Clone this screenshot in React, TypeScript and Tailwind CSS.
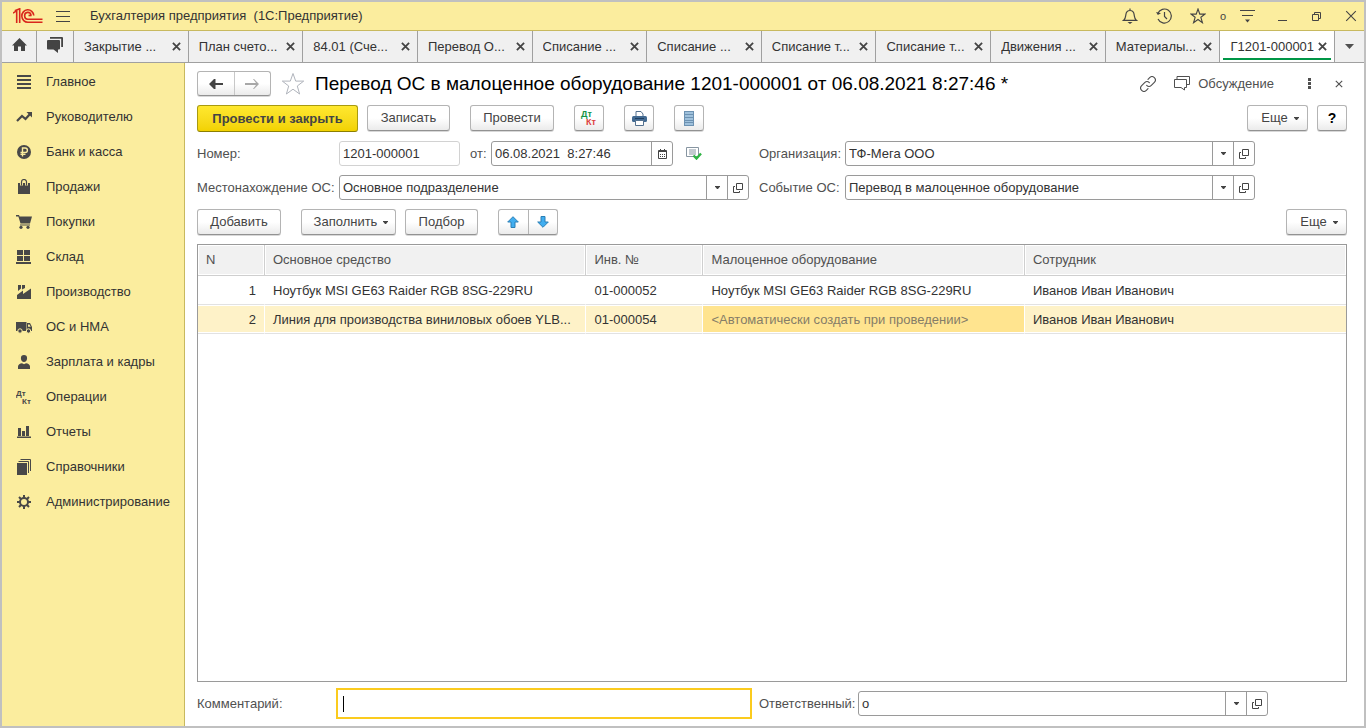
import { useState, type ReactNode } from 'react';

interface AssetRow {
  id: number;
  asset: string;
  inventory: string;
  equipment: string | null;
  employee: string;
}

const TABS = [
  'Закрытие ...',
  'План счето...',
  '84.01 (Сче...',
  'Перевод О...',
  'Списание ...',
  'Списание ...',
  'Списание т...',
  'Списание т...',
  'Движения ...',
  'Материалы...',
  'Г1201-000001',
];

const ROWS: AssetRow[] = [
  {
    id: 1,
    asset: 'Ноутбук MSI GE63 Raider RGB 8SG-229RU',
    inventory: '01-000052',
    equipment: 'Ноутбук MSI GE63 Raider RGB 8SG-229RU',
    employee: 'Иванов Иван Иванович',
  },
  {
    id: 2,
    asset: 'Линия для производства виниловых обоев YLB...',
    inventory: '01-000054',
    equipment: null,
    employee: 'Иванов Иван Иванович',
  },
];

const SECTIONS: { label: string; icon: ReactNode }[] = [
  { label: 'Главное', icon: <path d="M1 1h14v2H1zM1 5h14v2H1zM1 9h14v2H1zM1 13h14v2H1z" /> },
  {
    label: 'Руководителю',
    icon: (
      <>
        <path d="M1 12l5-5 3.5 3L14 5" fill="none" stroke="currentColor" strokeWidth="2.2" />
        <path d="M10.5 3H16v5.5z" />
      </>
    ),
  },
  {
    label: 'Банк и касса',
    icon: (
      <>
        <circle cx="8" cy="8" r="7" />
        <path d="M6.5 12.5V4h2.7a2.1 2.1 0 0 1 0 4.4H4.5M4.5 10.3h5" fill="none" stroke="#fbed9e" strokeWidth="1.4" />
      </>
    ),
  },
  {
    label: 'Продажи',
    icon: (
      <>
        <path d="M2 4h12v11H2z" />
        <path d="M5.5 6.500V3a2.5 2.5 0 0 1 5 0v3.500" fill="none" stroke="#fbed9e" strokeWidth="3" />
        <path d="M5.5 6.500V3a2.5 2.5 0 0 1 5 0v3.500" fill="none" stroke="currentColor" strokeWidth="1.2" />
      </>
    ),
  },
  {
    label: 'Покупки',
    icon: (
      <>
        <path d="M0 1h3l.6 1.500H16l-2 7H4.5L2.4 2.5H0z" />
        <path d="M4 10.500h10v1H4z" />
        <circle cx="5" cy="13.3" r="1.6" />
        <circle cx="12" cy="13.3" r="1.6" />
      </>
    ),
  },
  { label: 'Склад', icon: <path d="M1 1h6v5H1zM8 1h6v5H8zM1 7h6v5H1zM8 7h6v5H8zM0 13h15v2H0z" /> },
  { label: 'Производство', icon: <path d="M1 15v-4l6-4.500V10l8-5.5V15zM2 1h3v3.500L2 7zM6 1h3v3L6 5.5z" /> },
  {
    label: 'ОС и НМА',
    icon: (
      <>
        <path d="M0 3h10.5v9H0zM11 4h3l2 4v4h-5z" />
        <path d="M12 5.4h1.5l1.2 2.4H12z" fill="#fbed9e" />
        <circle cx="4" cy="12" r="2.2" stroke="#fbed9e" />
        <circle cx="12.5" cy="12" r="2.2" stroke="#fbed9e" />
      </>
    ),
  },
  {
    label: 'Зарплата и кадры',
    icon: <path d="M8 1a3.1 3.3 0 0 1 3.1 3.3C11.1 6.5 9.7 8 8 8S4.9 6.5 4.9 4.3A3.1 3.3 0 0 1 8 1zM2 15v-2.5C2 10.500 4 9.500 6 9.300l2 1 2-1c2 .2 4 1.200 4 3.200V15z" />,
  },
  {
    label: 'Операции',
    icon: (
      <>
        <text x="0" y="6.5" fontSize="8" fontWeight="bold">Дт</text>
        <text x="6" y="15" fontSize="8" fontWeight="bold">Кт</text>
      </>
    ),
  },
  { label: 'Отчеты', icon: <path d="M2 4h3v8H2zM6 7h3v5H6zM10 2h3v10h-3zM1 12.5h14V14H1z" /> },
  {
    label: 'Справочники',
    icon: (
      <>
        <path d="M1 4h10v12H1z" />
        <path d="M2.5 2.5h10V14M4.5.5h10V12" fill="none" stroke="currentColor" />
      </>
    ),
  },
  {
    label: 'Администрирование',
    icon: (
      <>
        <circle cx="8" cy="8" r="4" fill="none" stroke="currentColor" strokeWidth="2" />
        <path
          d="M8 1v3M8 12v3M1 8h3M12 8h3M3 3l2.2 2.2M10.800 10.800L13 13M13 3l-2.200 2.200M5.200 10.800L3 13"
          stroke="currentColor"
          strokeWidth="2"
        />
      </>
    ),
  },
];

const BTN =
  'flex items-center justify-center rounded-[3px] border border-[#b4b4b4] border-b-[#929292] bg-linear-to-b from-white from-50% to-[#ebebeb] text-[#444] shadow-[0_1px_0_#d8d8d8]';

function Logo() {
  return (
    <svg width="30" height="16" viewBox="0 0 30 16" fill="none" stroke="#d9261c" strokeWidth="1.6" aria-label="1С">
      <path d="M0 5.2L3.700 2.700V15M1.800 2.800L6.700.8V15" />
      <path d="M20.800 7.500A6 6.200 0 1 0 15 14.200H29.500" />
      <path d="M18 7.500A3.200 3.400 0 1 0 15 11.200H29.500" />
      <path d="M15.500 7.500h3" />
    </svg>
  );
}

function Caret() {
  return (
    <svg width="5" height="3" viewBox="0 0 5 3" fill="#444" aria-hidden="true">
      <path d="M0 0h5v.5L3 3H2L0 .5z" />
    </svg>
  );
}

function Cross({ size = 10, width = 1.2 }: { size?: number; width?: number }) {
  return (
    <svg width={size} height={size} viewBox="0 0 10 10" fill="none" stroke="currentColor" strokeWidth={width} aria-hidden="true">
      <path d="M1 1l8 8M9 1l-8 8" />
    </svg>
  );
}

function StarIcon({ size, color, width }: { size: number; color: string; width: number }) {
  return (
    <svg width={size} height={size} viewBox="0 0 24 24" fill="none" stroke={color} strokeWidth={width} aria-hidden="true">
      <path d="M12 1.500l2.700 7.600h8l-6.400 4.900 2.300 8L12 17.200 5.400 22l2.300-8L1.300 9.100h8z" />
    </svg>
  );
}

interface ComboProps {
  id: string;
  label: string;
  value: string;
  labelClass: string;
}

// Text field with a list button and an "open card" button
function Combo({ id, label, value, labelClass }: ComboProps) {
  const [text, setText] = useState(value);
  return (
    <div className="flex min-w-0 items-center">
      <label htmlFor={id} className={`${labelClass} shrink-0 whitespace-nowrap text-[#505050]`}>{label}</label>
      <div className="flex h-[25px] min-w-0 flex-1 rounded-[3px] border border-[#9a9a9a] bg-white">
        <input
          id={id}
          value={text}
          onChange={(e) => setText(e.target.value)}
          className="min-w-0 flex-1 bg-transparent px-[3px] outline-none"
        />
        <button aria-label="Выбрать" className="flex w-[21px] items-center justify-center border-l border-[#9a9a9a]">
          <Caret />
        </button>
        <button aria-label="Открыть" className="flex w-[21px] items-center justify-center border-l border-[#9a9a9a]">
          <svg width="10" height="10" viewBox="0 0 10 10" fill="none" stroke="#444">
            <path d="M3.500.5h6v6h-6zM2 3.500H.5v6h6V8" />
          </svg>
        </button>
      </div>
    </div>
  );
}

export default function App() {
  const [activeTab, setActiveTab] = useState(TABS.length - 1);
  const [date, setDate] = useState('06.08.2021  8:27:46');
  const [comment, setComment] = useState('');

  return (
    <div className="flex min-h-screen flex-col border-2 border-[#c0c0c0] bg-white font-['Liberation_Sans',Arial,sans-serif] text-[13px] leading-4 text-[#333]">
      {/* Window title bar */}
      <header className="flex h-[29px] items-center border-b border-[#c8b95f] bg-[#fbed9e] pl-[11px] pr-[7px]">
        <Logo />
        <button aria-label="Меню" className="ml-[13px]">
          <svg width="14" height="11" viewBox="0 0 14 11" stroke="#444">
            <path d="M0 .5h14M0 5.500h14M0 10.500h14" />
          </svg>
        </button>
        <span className="ml-5 flex-1 whitespace-pre">Бухгалтерия предприятия  (1С:Предприятие)</span>
        <div className="flex items-center text-[#444]">
          <button aria-label="Уведомления">
            <svg width="16" height="16" viewBox="0 0 16 16" fill="none" stroke="currentColor" strokeWidth="1.2">
              <path d="M8 .5v2M1.500 12.400c2-1.500 2-3 2.300-5.400C4.100 4 5.500 2.500 8 2.500S11.900 4 12.200 7c.3 2.400.3 3.900 2.300 5.400z" />
              <path d="M5.500 14h5L8 16z" fill="currentColor" stroke="none" />
            </svg>
          </button>
          <button aria-label="История" className="ml-[18px]">
            <svg width="16" height="16" viewBox="0 0 16 16" fill="none" stroke="currentColor" strokeWidth="1.2">
              <path d="M1.800 5.500A7 7 0 1 1 2 11M8.500 4v4.500L11 11" />
              <path d="M0 4l1.800 3L5 5.200z" fill="currentColor" stroke="none" />
            </svg>
          </button>
          <button aria-label="Избранное" className="ml-[18px]">
            <StarIcon size={16} color="#444" width={1.7} />
          </button>
          <span className="ml-[14px] text-[11px]">o</span>
          <button aria-label="Настройки" className="ml-[14px]">
            <svg width="15" height="13" viewBox="0 0 15 13" fill="none" stroke="currentColor">
              <path d="M0 .5h15M2 5.500h11" strokeWidth="1.2" />
              <path d="M5 9.500h5l-2.500 3z" fill="currentColor" stroke="none" />
            </svg>
          </button>
          <button aria-label="Свернуть" className="ml-[23px]">
            <svg width="9" height="9" viewBox="0 0 9 9" stroke="currentColor"><path d="M0 8.500h9" /></svg>
          </button>
          <button aria-label="Восстановить" className="ml-[25px]">
            <svg width="9" height="9" viewBox="0 0 9 9" fill="none" stroke="currentColor">
              <path d="M.5 2.500h6v6h-6zM2.500 2V.5h6v6H7" />
            </svg>
          </button>
          <button aria-label="Закрыть" className="ml-6">
            <Cross size={12} width={0.9} />
          </button>
        </div>
      </header>

      {/* Open windows */}
      <nav className="flex h-8 border-b border-[#a0a0a0] bg-[#f0f0f0]">
        <button aria-label="Начальная страница" className="flex w-[35px] shrink-0 items-center justify-center border-r border-[#a0a0a0] pb-1">
          <svg width="15" height="13" viewBox="0 0 15 13" fill="#444">
            <path d="M7.500 0L15 7.500h-2V13H9V8.500H6V13H2V7.500H0z" />
          </svg>
        </button>
        <button aria-label="Обсуждения" className="flex w-[37px] shrink-0 items-center justify-center border-r border-[#a0a0a0] pb-1">
          <svg width="16" height="16" viewBox="0 0 16 16" fill="#444">
            <path d="M1 3h11a1 1 0 0 1 1 1v7.500a1 1 0 0 1-1 1h-1V16l-4.500-3.500H1a1 1 0 0 1-1-1V4a1 1 0 0 1 1-1z" />
            <path d="M3 0h12a1 1 0 0 1 1 1v9h-1.800V1.800H3z" />
          </svg>
        </button>
        {TABS.map((tab, i) => (
          <div
            key={i}
            className={`flex min-w-0 flex-1 items-start border-r border-[#a0a0a0] px-[3px] ${i === activeTab ? 'bg-white' : ''}`}
          >
            <div
              className={`flex h-[29px] min-w-0 flex-1 items-center border-b-2 pt-1 pr-1 pl-[7px] ${i === activeTab ? 'border-[#009646]' : 'border-transparent'}`}
            >
              <button onClick={() => setActiveTab(i)} className="min-w-0 flex-1 truncate text-left">{tab}</button>
              <button aria-label={`Закрыть ${tab}`} className="shrink-0 text-[#444]">
                <Cross size={9} width={2} />
              </button>
            </div>
          </div>
        ))}
        <button aria-label="Все окна" className="flex w-[29px] shrink-0 items-center justify-center">
          <svg width="9" height="5" viewBox="0 0 9 5" fill="#505050"><path d="M0 0h9L4.500 5z" /></svg>
        </button>
      </nav>

      <div className="flex flex-1">
        {/* Sections panel */}
        <aside className="w-[183px] shrink-0 border-r border-[#c8b95f] bg-[#fbed9e] pt-px">
          {SECTIONS.map((section) => (
            <a key={section.label} href="#" className="flex h-[35px] items-center gap-[14px] pl-[14px]">
              <svg width="16" height="16" viewBox="0 0 16 16" fill="currentColor" className="shrink-0 text-[#484848]">
                {section.icon}
              </svg>
              {section.label}
            </a>
          ))}
        </aside>

        <main className="flex min-w-0 flex-1 flex-col pt-2 pr-[17px] pb-[7px] pl-3">
          {/* Document header */}
          <div className="flex h-[25px] items-center">
            <div className={`${BTN} h-[25px] w-[74px]`}>
              <button aria-label="Назад" className="flex h-full flex-1 items-center justify-center border-r border-[#c8c8c8]">
                <svg width="14" height="10" viewBox="0 0 14 10" fill="#444"><path d="M0 5L5 0h1.500v4H14v2H6.500v4H5z" /></svg>
              </button>
              <button aria-label="Вперед" className="flex h-full flex-1 items-center justify-center">
                <svg width="14" height="10" viewBox="0 0 14 10" fill="#a8a8a8"><path d="M14 5L9 0H8l3 4H0v2h11l-3 4h1z" /></svg>
              </button>
            </div>
            <button aria-label="В избранное" className="ml-[10px]">
              <StarIcon size={24} color="#b0b4bc" width={1} />
            </button>
            <h1 className="ml-[10px] flex-1 truncate text-[19px] leading-6 text-black">
              Перевод ОС в малоценное оборудование 1201-000001 от 06.08.2021 8:27:46 *
            </h1>
            <button aria-label="Получить ссылку">
              <svg width="16" height="16" viewBox="0 0 24 24" fill="none" stroke="#505050" strokeWidth="1.7" strokeLinecap="round">
                <path d="M10 14a5 5 0 0 0 7 0l4.500-4.500a4.700 4.700 0 0 0-7-7L12 5M14 10a5 5 0 0 0-7 0l-4.500 4.500a4.700 4.700 0 0 0 7 7L12 19" />
              </svg>
            </button>
            <button className="ml-[18px] flex items-center gap-2 text-[#505050]">
              <svg width="16" height="15" viewBox="0 0 16 15" fill="none" stroke="currentColor">
                <path d="M.5 3.500h12v8h-2V14L7 11.500H.5z" />
                <path d="M3 3V.5h12.500v8H13" />
              </svg>
              Обсуждение
            </button>
            <button aria-label="Дополнительно" className="ml-[34px]">
              <svg width="3" height="11" viewBox="0 0 3 11" fill="#505050"><path d="M0 0h3v3H0zM0 4h3v3H0zM0 8h3v3H0z" /></svg>
            </button>
            <button aria-label="Закрыть документ" className="mr-1 ml-6 text-[#505050]">
              <Cross size={8} width={1.4} />
            </button>
          </div>

          {/* Commands */}
          <div className="mt-[9px] flex">
            <button className="flex h-[27px] w-[161px] items-center justify-center rounded-[3px] border border-[#a89a10] border-b-[#8c7f00] bg-linear-to-b from-[#ffe82e] to-[#f2d200] font-bold text-[#444]">
              Провести и закрыть
            </button>
            <button className={`${BTN} ml-[9px] h-[26px] w-[83px]`}>Записать</button>
            <button className={`${BTN} ml-5 h-[26px] w-[84px]`}>Провести</button>
            <button aria-label="Показать проводки" className={`${BTN} ml-5 h-[26px] w-[30px]`}>
              <svg width="18" height="18" viewBox="0 0 18 18" fontSize="9" fontWeight="bold">
                <text x="1" y="8" fill="#149447">Дт</text>
                <text x="6" y="16" fill="#dd4040">Кт</text>
              </svg>
            </button>
            <button aria-label="Печать" className={`${BTN} ml-5 h-[26px] w-[30px]`}>
              <svg width="15" height="15" viewBox="0 0 15 15">
                <path d="M4 5V.5h5L11 3v2" fill="#fff" stroke="#54718f" />
                <rect y="5" width="15" height="6" rx="1.5" fill="#426a92" />
                <path d="M3 7.500h9" stroke="#1f3f61" />
                <path d="M3.500 9.500h8v5h-8z" fill="#fff" stroke="#54718f" />
              </svg>
            </button>
            <button aria-label="Реестр" className={`${BTN} ml-5 h-[26px] w-[30px]`}>
              <svg width="10" height="15" viewBox="0 0 10 15">
                <path d="M0 0h10v15H0z" fill="#6d92b2" />
                <path d="M1 1h8v2H1zM1 4h8v2H1zM1 7h8v2H1zM1 10h8v1H1zM1 12h8v2H1z" fill="#9fc1dc" />
              </svg>
            </button>
            <button className={`${BTN} ml-auto h-[26px] w-[61px] gap-[6px] pl-[5px]`}>Еще <Caret /></button>
            <button className={`${BTN} ml-[9px] h-[26px] w-[30px] text-[14px] font-bold text-black`}>?</button>
          </div>

          {/* Document fields */}
          <div className="mt-[9px] grid grid-cols-[552fr_496fr_82fr] gap-x-[10px] gap-y-[9px]">
            <div className="flex min-w-0 items-center">
              <label htmlFor="number" className="w-[142px] shrink-0 text-[#505050]">Номер:</label>
              <input
                id="number"
                defaultValue="1201-000001"
                className="h-[25px] w-[121px] rounded-[3px] border border-[#d2d2d2] px-[3px] outline-none"
              />
              <label htmlFor="date" className="ml-[10px] w-[21px] shrink-0 text-[#505050]">от:</label>
              <div className="flex h-[25px] w-[182px] rounded-[3px] border border-[#9a9a9a]">
                <input
                  id="date"
                  value={date}
                  onChange={(e) => setDate(e.target.value)}
                  className="min-w-0 flex-1 bg-transparent px-[3px] outline-none"
                />
                <button aria-label="Календарь" className="flex w-[21px] items-center justify-center border-l border-[#9a9a9a]">
                  <svg width="9" height="10" viewBox="0 0 9 10" fill="none" stroke="#444">
                    <path d="M.5 1.500h8v8h-8z" />
                    <path d="M0 2.500h9M2.500 0v2M6.500 0v2" />
                    <path d="M2 5.500h1M4 5.500h1M6 5.500h1M2 7.500h1M4 7.500h1M6 7.500h1" />
                  </svg>
                </button>
              </div>
              <svg width="16" height="13" viewBox="0 0 16 13" fill="none" className="ml-[13px] shrink-0">
                <path d="M.5.5h12v9H.5z" stroke="#8795a1" fill="#fff" />
                <path d="M3 3h7M3 5h7M3 7h7" stroke="#8795a1" />
                <path d="M7.500 8.500l3 3L15 6.500" stroke="#2fb344" strokeWidth="2.4" />
              </svg>
            </div>
            <Combo id="organization" label="Организация:" value="ТФ-Мега ООО" labelClass="w-[86px]" />
            <div />
            <Combo id="location" label="Местонахождение ОС:" value="Основное подразделение" labelClass="w-[142px]" />
            <Combo id="event" label="Событие ОС:" value="Перевод в малоценное оборудование" labelClass="w-[86px]" />
          </div>

          {/* Table commands */}
          <div className="mt-[9px] flex h-[27px]">
            <button className={`${BTN} h-[26px] w-[84px]`}>Добавить</button>
            <button className={`${BTN} ml-5 h-[26px] w-[95px] gap-[6px] pl-[5px]`}>Заполнить <Caret /></button>
            <button className={`${BTN} ml-[9px] h-[26px] w-[73px]`}>Подбор</button>
            <div className={`${BTN} ml-5 h-[26px] w-[60px]`}>
              <button aria-label="Переместить вверх" className="flex h-full flex-1 items-center justify-center border-r border-[#b4b4b4]">
                <svg width="12" height="12" viewBox="0 0 12 12" fill="#41aef0" stroke="#2a7fb5"><path d="M6 .7L11.300 6H8v5.500H4V6H.7z" /></svg>
              </button>
              <button aria-label="Переместить вниз" className="flex h-full flex-1 items-center justify-center">
                <svg width="12" height="12" viewBox="0 0 12 12" fill="#41aef0" stroke="#2a7fb5"><path d="M6 11.300L.7 6H4V.5h4V6h3.300z" /></svg>
              </button>
            </div>
            <button className={`${BTN} ml-auto h-[26px] w-[61px] gap-[6px] pl-[5px]`}>Еще <Caret /></button>
          </div>

          {/* Fixed assets */}
          <div className="mt-2 flex-1 border border-[#9a9a9a]">
            <table className="w-full table-fixed border-separate border-spacing-0 text-left">
              <thead>
                <tr className="h-[31px] bg-[#f1f1f1] text-[#505050]">
                  <th className="w-[67px] border-r border-b border-[#cfcfcf] px-2 font-normal shadow-[inset_0_0_0_1px_#fff]">N</th>
                  <th className="w-[28%] border-r border-b border-[#cfcfcf] px-2 font-normal shadow-[inset_0_0_0_1px_#fff]">Основное средство</th>
                  <th className="w-[117px] border-r border-b border-[#cfcfcf] px-2 font-normal shadow-[inset_0_0_0_1px_#fff]">Инв. №</th>
                  <th className="w-[28%] border-r border-b border-[#cfcfcf] px-2 font-normal shadow-[inset_0_0_0_1px_#fff]">Малоценное оборудование</th>
                  <th className="border-b border-[#cfcfcf] px-2 font-normal shadow-[inset_0_0_0_1px_#fff]">Сотрудник</th>
                </tr>
              </thead>
              <tbody>
                {ROWS.map((row) => {
                  const cell = `border-b border-b-[#e2e2e2] px-2 pt-0.5 truncate ${row.equipment ? '' : 'bg-[#fef2c8] shadow-[inset_0_1px_0_#fff,inset_0_-1px_0_#fff]'}`;
                  return (
                    <tr key={row.id} className="h-[29px]">
                      <td className={`${cell} border-r border-r-white text-right`}>{row.id}</td>
                      <td className={`${cell} border-r border-r-white`}>{row.asset}</td>
                      <td className={`${cell} border-r border-r-white`}>{row.inventory}</td>
                      {row.equipment ? (
                        <td className={`${cell} border-r border-r-white`}>{row.equipment}</td>
                      ) : (
                        <td className="truncate border-r border-b border-r-white border-b-[#e2e2e2] bg-[#ffe48f] px-2 pt-0.5 text-[#857d68] shadow-[inset_0_1px_0_#fff,inset_0_-1px_0_#fff]">
                          &lt;Автоматически создать при проведении&gt;
                        </td>
                      )}
                      <td className={cell}>{row.employee}</td>
                    </tr>
                  );
                })}
              </tbody>
            </table>
          </div>

          {/* Footer fields */}
          <div className="mt-[6px] grid grid-cols-[555fr_509fr_72fr] gap-x-[7px]">
            <div className="flex items-center">
              <label htmlFor="comment" className="w-[139px] shrink-0 text-[#505050]">Комментарий:</label>
              <div className="flex h-[31px] min-w-0 flex-1 items-center border-2 border-[#fbcb1e] pl-[5px]">
                <span className="h-4 w-px bg-black" />
                <input
                  id="comment"
                  value={comment}
                  onChange={(e) => setComment(e.target.value)}
                  className="min-w-0 flex-1 bg-transparent outline-none"
                />
              </div>
            </div>
            <Combo id="responsible" label="Ответственный:" value="о" labelClass="w-[99px]" />
          </div>
        </main>
      </div>
    </div>
  );
}
